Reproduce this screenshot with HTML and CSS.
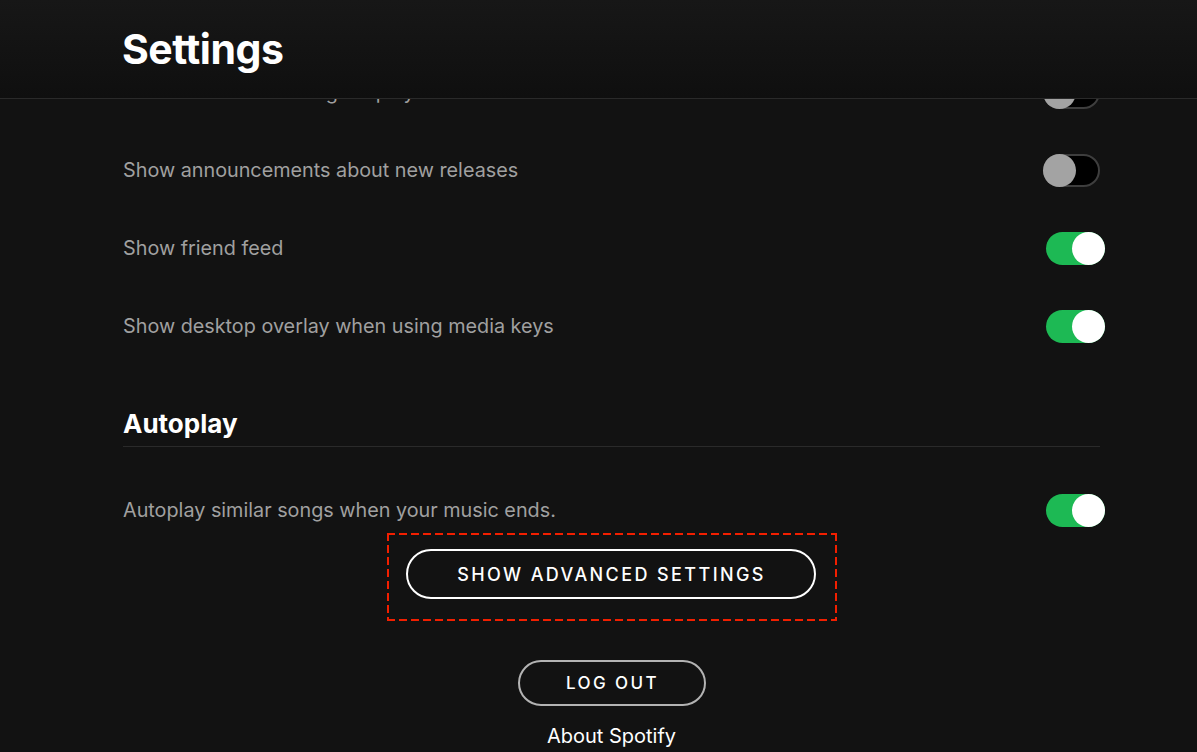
FILE: index.html
```html
<!DOCTYPE html>
<html lang="en">
<head>
    <meta charset="UTF-8">
    <meta name="viewport" content="width=device-width, initial-scale=1.0">
    <title>Settings</title>
    <link rel="stylesheet" href="styles.css">
</head>
<body>
    <div class="topbar">
        <h1>Settings</h1>
    </div>

    <main class="content">
        <div class="row">
            <span class="label">Show unavailable songs in playlists</span>
            <span class="toggle"></span>
        </div>
        <div class="row">
            <span class="label">Show announcements about new releases</span>
            <span class="toggle"></span>
        </div>
        <div class="row">
            <span class="label">Show friend feed</span>
            <span class="toggle on"></span>
        </div>
        <div class="row">
            <span class="label">Show desktop overlay when using media keys</span>
            <span class="toggle on"></span>
        </div>

        <h2 class="section-title">Autoplay</h2>
        <div class="row row-autoplay">
            <span class="label">Autoplay similar songs when your music ends.</span>
            <span class="toggle on"></span>
        </div>

        <div class="actions">
            <div class="highlight">
                <button class="btn btn-advanced">Show Advanced Settings</button>
            </div>
            <button class="btn btn-logout">Log Out</button>
            <a class="about" href="#">About Spotify</a>
        </div>
    </main>
</body>
</html>
```

FILE: styles.css
```css
* {
    box-sizing: border-box;
    margin: 0;
    padding: 0;
}
body {
    font-family: 'Inter', 'Liberation Sans', sans-serif;
    background: #121212;
    color: #fff;
    height: 752px;
    overflow: hidden;
    position: relative;
}
.topbar {
    position: absolute;
    top: 0;
    left: 0;
    right: 0;
    height: 99px;
    z-index: 2;
    background: linear-gradient(to bottom, #171717, #0f0f0f);
    border-bottom: 1px solid #2a2a2a;
    padding-left: 122px;
}
.topbar h1 {
    font-size: 41px;
    font-weight: 700;
    line-height: 98px;
    letter-spacing: -0.5px;
}
.content {
    padding: 53px 97px 0 123px;
}
.row {
    height: 78px;
    display: flex;
    align-items: center;
    justify-content: space-between;
}
.label {
    font-size: 19.8px;
    color: #a0a0a0;
}
.toggle {
    width: 57px;
    height: 33px;
    border-radius: 17px;
    background: #000;
    border: 2px solid #3e3e3e;
    position: relative;
}
.toggle::after {
    content: '';
    position: absolute;
    left: -2px;
    top: -2px;
    width: 33px;
    height: 33px;
    border-radius: 50%;
    background: #a3a3a3;
}
.toggle.on {
    width: 59px;
    margin-right: -5px;
    background: #1db954;
    border: none;
}
.toggle.on::after {
    left: auto;
    right: 0;
    top: 0;
    background: #fff;
}
.section-title {
    margin-top: 40px;
    font-size: 26px;
    font-weight: 700;
    line-height: 38px;
    padding-bottom: 3px;
    border-bottom: 1px solid #2a2a2a;
}
.row-autoplay {
    margin-top: 24px;
}
.actions {
    display: flex;
    flex-direction: column;
    align-items: center;
}
.highlight {
    margin-top: -16px;
    width: 450px;
    padding: 16px 19px 22px;
    background:
        repeating-linear-gradient(90deg, #f21f00 0 8px, transparent 8px 12px) top / 100% 2px no-repeat,
        repeating-linear-gradient(90deg, #f21f00 0 8px, transparent 8px 12px) bottom / 100% 2px no-repeat,
        repeating-linear-gradient(180deg, #f21f00 0 8px, transparent 8px 12px) left / 2px 100% no-repeat,
        repeating-linear-gradient(180deg, #f21f00 0 8px, transparent 8px 12px) right / 2px 100% no-repeat;
}
.btn {
    display: block;
    background: transparent;
    color: #fff;
    font-family: 'Inter', 'Liberation Sans', sans-serif;
    font-size: 17px;
    font-weight: 500;
    text-transform: uppercase;
    letter-spacing: 2.4px;
    border: 2px solid #fff;
    border-radius: 25px;
    padding-left: 2px;
}
.btn-advanced {
    width: 410px;
    height: 50px;
    font-size: 18px;
}
.btn-logout {
    margin-top: 39px;
    width: 188px;
    height: 46px;
    border-color: #b3b3b3;
}
.about {
    margin-top: 17px;
    font-size: 20px;
    line-height: 26px;
    color: #fff;
    text-decoration: none;
}
```
